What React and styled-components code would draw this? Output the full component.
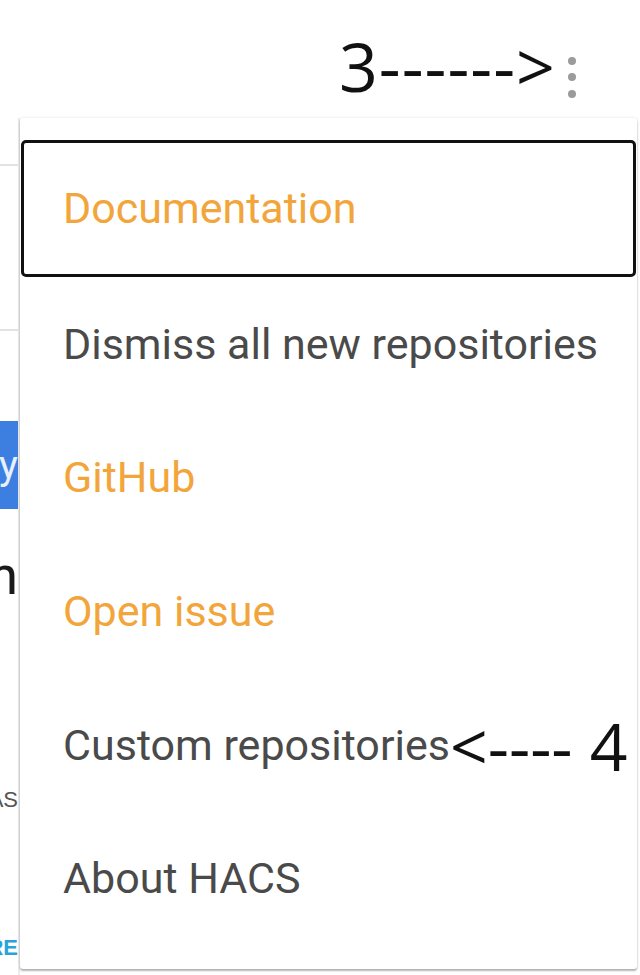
import React from 'react';
import styled, { createGlobalStyle } from 'styled-components';

const GlobalStyle = createGlobalStyle`
    html, body {
        margin: 0;
        padding: 0;
        background: #ffffff;
    }
`;

const Page = styled.div`
    position: relative;
    width: 640px;
    height: 975px;
    overflow: hidden;
    background: #ffffff;
`;

const Header = styled.div`
    display: flex;
    flex-direction: row;
    align-items: flex-start;
    justify-content: flex-end;
    height: 118px;
    padding: 32px 62px 0 0;
    box-sizing: border-box;
`;

const Annotation = styled.span`
    font-family: "Open Sans", "Liberation Sans", sans-serif;
    font-size: ${props => props.size || 64}px;
    line-height: 1;
    color: #111111;
    white-space: pre;
    letter-spacing: ${props => props.spacing || 0}px;
`;

const Kebab = styled.svg`
    width: 12px;
    height: 48px;
    margin-left: 10px;
    margin-top: 21px;
`;

const Backdrop = styled.div`
    display: flex;
    flex-direction: column;
    width: 18px;
    overflow: hidden;
    border-right: 2px solid #ececec;
    height: 857px;
`;

const Rule = styled.div`
    height: 2px;
    background: #e2e2e2;
    margin-top: ${props => props.gap}px;
`;

const BlueButton = styled.div`
    margin-top: 90px;
    height: 88px;
    background: #3d7fe0;
    display: flex;
    align-items: center;
    justify-content: flex-end;
    font-family: "Roboto", sans-serif;
    font-size: 40px;
    color: #e8f0ff;
`;

const Clipped = styled.div`
    margin-top: ${props => props.gap}px;
    font-family: ${props => props.font || '"Roboto", sans-serif'};
    font-size: ${props => props.size}px;
    font-weight: ${props => props.weight || 400};
    color: ${props => props.color};
    line-height: 1;
    white-space: nowrap;
    direction: rtl;
    text-align: right;
`;

const Menu = styled.div`
    position: absolute;
    top: 118px;
    left: 20px;
    width: 617px;
    height: 851px;
    box-sizing: border-box;
    padding: 22px 1px 24px 1px;
    background: #ffffff;
    border-radius: 3px;
    box-shadow: 0 2px 2px rgba(0, 0, 0, 0.28), 0 0 3px rgba(0, 0, 0, 0.12);
    display: flex;
    flex-direction: column;
`;

const MenuItem = styled.div`
    display: flex;
    align-items: center;
    height: ${props => (props.focused ? 137 : 134)}px;
    box-sizing: border-box;
    padding-left: ${props => (props.focused ? 39 : 42)}px;
    border: ${props => (props.focused ? '3px solid #111111' : 'none')};
    border-radius: 5px;
    font-family: "Roboto", "Liberation Sans", sans-serif;
    font-size: 43px;
    color: ${props => (props.link ? '#f2a53a' : '#4a4a4a')};
    white-space: nowrap;
`;

const items = [
    { label: 'Documentation', link: true, focused: true },
    { label: 'Dismiss all new repositories' },
    { label: 'GitHub', link: true },
    { label: 'Open issue', link: true },
    { label: 'Custom repositories', note: true },
    { label: 'About HACS' },
];

function App() {
    return (
        <Page>
            <GlobalStyle />
            <Header>
                <Annotation size={68} spacing={1}>3------&gt;</Annotation>
                <Kebab viewBox="0 0 12 48">
                    <circle cx="6" cy="8" r="4" fill="#9b9b9b" />
                    <circle cx="6" cy="24" r="4" fill="#9b9b9b" />
                    <circle cx="6" cy="41" r="4" fill="#9b9b9b" />
                </Kebab>
            </Header>
            <Backdrop>
                <Rule gap={46} />
                <Rule gap={163} />
                <BlueButton>ry</BlueButton>
                <Clipped gap={40} size={54} color="#1a1a1a">n</Clipped>
                <Clipped gap={186} size={22} color="#555555" font={'"Liberation Sans", sans-serif'}>AS</Clipped>
                <Clipped gap={126} size={22} weight={700} color="#2aa3dc" font={'"Liberation Sans", sans-serif'}>RE</Clipped>
            </Backdrop>
            <Menu>
                {items.map(item => (
                    <MenuItem key={item.label} link={item.link} focused={item.focused}>
                        {item.label}
                        {item.note && <Annotation size={66}>&lt;---- 4</Annotation>}
                    </MenuItem>
                ))}
            </Menu>
        </Page>
    );
}

export default App;
